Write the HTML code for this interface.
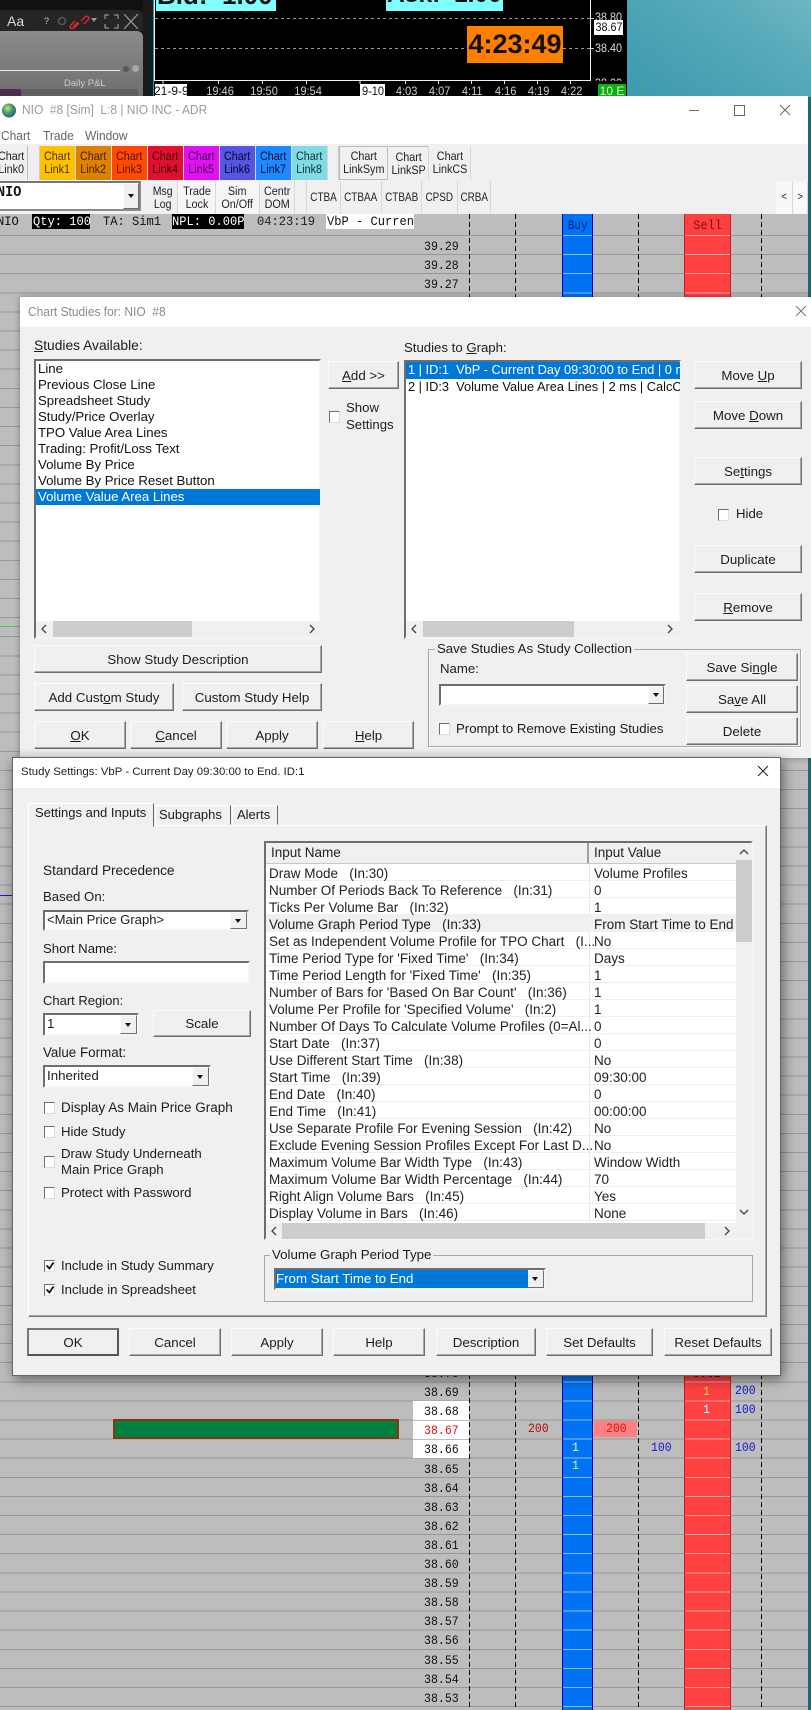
<!DOCTYPE html>
<html><head><meta charset="utf-8"><style>
html,body{margin:0;padding:0;width:811px;height:1710px;overflow:hidden;background:#bdbdbd}
body{position:relative;font-family:"Liberation Sans",sans-serif;font-size:13.2px;color:#1c1c1c}
div,span.a,svg.a{position:absolute}
.t{position:absolute;white-space:nowrap;line-height:16px}
.m{position:absolute;white-space:nowrap;line-height:16px;font-family:"Liberation Mono",monospace;font-size:13px;color:#111;transform:scaleX(.89);transform-origin:left}
.n{position:absolute;white-space:nowrap;line-height:16px;font-family:"Liberation Mono",monospace;font-size:12.5px;transform:scaleX(.92);transform-origin:left}
.q{position:absolute;white-space:nowrap;line-height:15px;height:15px;font-family:"Liberation Mono",monospace;font-size:13px;color:#111}
.q span{display:inline-block;transform:scaleX(.93);transform-origin:left}
.sq{transform:scaleX(.92);transform-origin:left}
.b{position:absolute;box-sizing:border-box;background:#f0f0f0;border:1px solid;border-color:#fbfbfb #6e6e6e #6e6e6e #fbfbfb;box-shadow:inset -1px -1px 0 #a8a8a8;display:flex;align-items:center;justify-content:center;white-space:nowrap;font-size:13.3px}
.tb{position:absolute;box-sizing:border-box;text-align:center;font-size:12.4px;line-height:13px;color:#222;display:flex;align-items:center;justify-content:center;overflow:hidden;border-right:1px solid #d8d8d8}
.tb span{display:inline-block;transform:scaleX(.87)}
.s{transform:scaleX(.8)!important}
.cb{position:absolute;box-sizing:border-box;width:11px;height:12px;background:#fff;border:1px solid;border-color:#6e6e6e #ddd #ddd #6e6e6e}
.in{position:absolute;box-sizing:border-box;background:#fff;border:2px solid;border-color:#6e6e6e #f4f4f4 #f4f4f4 #6e6e6e}
.ar{position:absolute;box-sizing:border-box;top:0;bottom:0;right:0;background:#f0f0f0;border:1px solid;border-color:#fbfbfb #6e6e6e #6e6e6e #fbfbfb}
.ar:after{content:"";position:absolute;left:50%;top:50%;margin:-2px 0 0 -3.5px;border:3.5px solid transparent;border-top:4px solid #111;border-bottom:0}
.dv{position:absolute;top:214px;height:1496px;width:1px;background:repeating-linear-gradient(to bottom,#000 0 5px,transparent 5px 8px)}
.r{position:absolute;left:269px;white-space:nowrap;line-height:17px;font-size:13.5px;color:#222}
.v{position:absolute;left:594px;white-space:nowrap;line-height:17px;font-size:13.5px;color:#222}
.li{position:absolute;left:38px;white-space:nowrap;line-height:16px;font-size:13.2px;color:#111}
</style></head><body>

<!-- top backdrop -->
<div style="left:0;top:0;width:811px;height:97px;background:#000"></div>
<div style="left:627px;top:0;width:184px;height:97px;background:linear-gradient(35deg,#3f9aad 0%,#4ba3b4 40%,#5aabbb 70%,#6fb6c3 100%)"></div>
<!-- left panel -->
<div style="left:0;top:0;width:143px;height:97px;background:#111"></div>
<div style="left:0;top:10px;width:143px;height:21px;background:#252525;border-radius:0 6px 0 0"></div>
<div style="left:0;top:31px;width:143px;height:66px;background:linear-gradient(#8a8a8a,#6f6f6f);border-radius:0 6px 0 0"></div>
<div style="left:0;top:70px;width:120px;height:1px;background:#eee"></div>
<div style="left:0;top:89px;width:138px;height:8px;background:#5f5f5f"></div>
<div style="left:0;top:89px;width:21px;height:8px;background:#4c2c4c"></div>
<div class="t" style="left:64px;top:76px;font-size:9.5px;color:#ccc">Daily P&amp;L</div>
<div style="left:123px;top:66px;width:6px;height:6px;border-radius:50%;background:#555"></div>
<div style="left:132px;top:65px;width:7px;height:7px;border-radius:50%;background:#a8a8a8"></div>
<div class="t" style="left:7px;top:13px;font-size:14px;color:#ddd">Aa</div>
<div class="t" style="left:44px;top:13px;font-size:9px;color:#ccc">?</div>
<svg class="a" style="left:56px;top:14px" width="84" height="15" viewBox="0 0 84 15" fill="none">
<circle cx="6" cy="7" r="3.5" stroke="#555" stroke-width="1.6"/>
<path d="M17 13l5-5M25 7l4-4c3-2 5 1 3 3l-4 4M23 9l-5 5c-3 2-5-1-3-3l4-4" stroke="#d02a30" stroke-width="1.5"/>
<path d="M35 4h6l-3 4z" fill="#999"/>
<path d="M49 5V1h4M58 1h4v4M62 10v4h-4M53 14h-4v-4" stroke="#aaa" stroke-width="1"/>
<path d="M68 0l14 15M82 0L68 15" stroke="#9a9a9a" stroke-width="1.2"/>
</svg>
<!-- chart -->
<div style="left:143px;top:0;width:10px;height:97px;background:#1a1a1a"></div>
<div style="left:153px;top:0;width:1px;height:97px;background:#2a9aa8"></div>
<div style="left:154px;top:0;width:1px;height:81px;background:#eee"></div>
<div style="left:154px;top:80px;width:437px;height:1px;background:#f0f0f0"></div>
<div style="left:590px;top:0;width:1px;height:81px;background:#f0f0f0"></div>
<div style="left:155px;top:18px;width:435px;height:1px;background:repeating-linear-gradient(to right,#999 0 3px,transparent 3px 6px)"></div>
<div style="left:155px;top:48px;width:435px;height:1px;background:repeating-linear-gradient(to right,#999 0 3px,transparent 3px 6px)"></div>
<div style="left:156px;top:0;width:120px;height:11px;background:#80ffff"></div>
<div style="left:386px;top:0;width:117px;height:11px;background:#80ffff"></div>
<div style="left:156px;top:0;width:120px;height:5px;overflow:hidden"><div class="t" style="left:1px;top:-18px;line-height:26px;font-weight:bold;font-size:26px;color:#111;white-space:pre">Bid:  1.00</div></div>
<div style="left:386px;top:0;width:117px;height:5px;overflow:hidden"><div class="t" style="left:1px;top:-18px;line-height:26px;font-weight:bold;font-size:24.6px;color:#111;white-space:pre">Ask:  1.00</div></div>
<div style="left:467px;top:26px;width:96px;height:37px;background:#ff8000"></div>
<div class="t" style="left:467px;top:29px;width:96px;line-height:30px;text-align:center;font-weight:bold;font-size:27px;color:#111">4:23:49</div>
<div style="left:591px;top:18px;width:3px;height:1px;background:#ccc"></div>
<div style="left:591px;top:48px;width:3px;height:1px;background:#ccc"></div>
<div class="t" style="left:595px;top:9px;font-size:12px;color:#ddd;transform:scaleX(.9);transform-origin:left">38.80</div>
<div class="t" style="left:594px;top:20px;width:29px;height:15px;background:#fff;color:#111;font-size:12px;line-height:15px;text-align:center"><span style="display:inline-block;transform:scaleX(.9)">38.67</span></div>
<div class="t" style="left:595px;top:40px;font-size:12px;color:#ddd;transform:scaleX(.9);transform-origin:left">38.40</div>
<div style="left:592px;top:75px;width:34px;height:6px;overflow:hidden"><div class="t" style="left:3px;top:0;font-size:12px;color:#ddd;transform:scaleX(.9);transform-origin:left">38.00</div></div>
<!-- time axis -->
<div style="left:155px;top:84px;width:32px;height:13px;background:#fff"></div>
<div style="left:360px;top:84px;width:25px;height:13px;background:#fff"></div>
<div style="left:0;top:0;width:0;height:0;color:#ccc;font-size:12px">
<div class="t" style="left:154px;top:83px;width:33px;overflow:hidden;color:#111;font-size:12px">21-9-9</div>
<div class="t" style="left:205px;top:83px;font-size:12px;transform:scaleX(.92)">19:46</div>
<div class="t" style="left:249px;top:83px;font-size:12px;transform:scaleX(.92)">19:50</div>
<div class="t" style="left:293px;top:83px;font-size:12px;transform:scaleX(.92)">19:54</div>
<div class="t" style="left:361px;top:83px;font-size:12px;color:#111;transform:scaleX(.92)">9-10</div>
<div class="t" style="left:395px;top:83px;font-size:12px;transform:scaleX(.92)">4:03</div>
<div class="t" style="left:428px;top:83px;font-size:12px;transform:scaleX(.92)">4:07</div>
<div class="t" style="left:461px;top:83px;font-size:12px;transform:scaleX(.92)">4:11</div>
<div class="t" style="left:494px;top:83px;font-size:12px;transform:scaleX(.92)">4:16</div>
<div class="t" style="left:527px;top:83px;font-size:12px;transform:scaleX(.92)">4:19</div>
<div class="t" style="left:560px;top:83px;font-size:12px;transform:scaleX(.92)">4:22</div>
</div>
<svg class="a" style="left:155px;top:80px" width="436" height="5" stroke="#eee" stroke-width="1"><path d="M8 0v4M63.500 0v4M107.500 0v4M151.500 0v4M205 0v4M250.500 0v4M283.500 0v4M316.500 0v4M349.500 0v4M382.500 0v4M415.500 0v4"/></svg>
<div class="t" style="left:598px;top:84px;width:28px;height:13px;background:#0cb00c;color:#e8e8e8;font-size:12px;line-height:14px;text-align:center">10 E</div>

<!-- ladder -->
<div style="left:0;top:214px;width:808px;height:1496px;background:#bdbdbd"></div>
<div style="left:808px;top:97px;width:3px;height:1613px;background:#1f6a70"></div>
<div style="left:0;top:235px;width:808px;height:1475px;background:repeating-linear-gradient(to bottom,#979797 0 1px,transparent 1px 19.105px)"></div>
<div style="left:562px;top:214px;width:31px;height:1496px;box-sizing:border-box;border-left:1px solid #0000c8;border-right:1px solid #0000c8;background:#0073f5"></div>
<div style="left:563px;top:235px;width:29px;height:1475px;background:repeating-linear-gradient(to bottom,#8fbcf0 0 1px,transparent 1px 19.105px)"></div>
<div style="left:684px;top:214px;width:47px;height:1496px;box-sizing:border-box;border-left:1px solid #d01818;border-right:1px solid #d01818;background:#ff4040"></div>
<div style="left:685px;top:235px;width:45px;height:1475px;background:repeating-linear-gradient(to bottom,#f5a5a5 0 1px,transparent 1px 19.105px)"></div>
<div class="dv" style="left:469px"></div><div class="dv" style="left:515px"></div><div class="dv" style="left:638px"></div><div class="dv" style="left:761px"></div>
<div class="t" style="left:562px;top:218px;width:31px;text-align:center;font-family:'Liberation Mono',monospace;font-size:13px;color:#002080"><span style="display:inline-block;transform:scaleX(.85)">Buy</span></div>
<div class="t" style="left:684px;top:218px;width:47px;text-align:center;font-family:'Liberation Mono',monospace;font-size:13px;color:#801010"><span style="display:inline-block;transform:scaleX(.93)">Sell</span></div>
<!-- info row -->
<div style="left:0;top:214px;width:20px;height:16px;overflow:hidden"><div class="q" style="left:-3px;top:0"><span>NIO</span></div></div>
<div class="q" style="left:32px;top:214px;width:58px;background:#000;color:#fff"><span style="margin-left:1px">Qty: 100</span></div>
<div class="q" style="left:103px;top:214px"><span>TA: Sim1</span></div>
<div class="q" style="left:172px;top:214px;width:72px;background:#000;color:#fff"><span>NPL: 0.00P</span></div>
<div class="q" style="left:257px;top:214px;color:#222"><span>04:23:19</span></div>
<div class="q" style="left:326px;top:214px;width:88px;background:#fff;overflow:hidden"><span style="margin-left:1px">VbP - Current</span></div>
<!-- prices top -->
<div class="m" style="left:424px;top:239px">39.29</div>
<div class="m" style="left:424px;top:258px">39.28</div>
<div class="m" style="left:424px;top:277px">39.27</div>
<!-- left strays -->
<div style="left:0;top:626px;width:20px;height:1px;background:#40d040"></div>
<div style="left:0;top:895px;width:13px;height:1px;background:#1414d8"></div>
<!-- prices bottom -->
<div class="m" style="left:424px;top:1366px">38.70</div>
<div class="m" style="left:693px;top:1366px;color:#222">0.02</div>
<div class="m" style="left:424px;top:1385px">38.69</div>
<div style="left:413px;top:1401px;width:56px;height:57px;background:#fff"></div>
<div style="left:413px;top:1420px;width:56px;height:1px;background:#bbb"></div>
<div style="left:413px;top:1439px;width:56px;height:1px;background:#bbb"></div>
<div class="m" style="left:424px;top:1404px">38.68</div>
<div class="m" style="left:424px;top:1423px;color:#e01010">38.67</div>
<div class="m" style="left:424px;top:1442px">38.66</div>
<div class="m" style="left:424px;top:1462px">38.65</div>
<div class="m" style="left:424px;top:1481px">38.64</div>
<div class="m" style="left:424px;top:1500px">38.63</div>
<div class="m" style="left:424px;top:1519px">38.62</div>
<div class="m" style="left:424px;top:1538px">38.61</div>
<div class="m" style="left:424px;top:1557px">38.60</div>
<div class="m" style="left:424px;top:1576px">38.59</div>
<div class="m" style="left:424px;top:1595px">38.58</div>
<div class="m" style="left:424px;top:1614px">38.57</div>
<div class="m" style="left:424px;top:1633px">38.56</div>
<div class="m" style="left:424px;top:1653px">38.55</div>
<div class="m" style="left:424px;top:1672px">38.54</div>
<div class="m" style="left:424px;top:1691px">38.53</div>
<div style="left:113px;top:1419px;width:286px;height:20px;box-sizing:border-box;background:#008044;border:2px solid #8a3410"></div>
<div style="left:594px;top:1421px;width:43px;height:16px;background:#ff8080"></div>
<div class="n" style="left:528px;top:1421px;color:#a81010">200</div>
<div class="n" style="left:606px;top:1421px;color:#e01010">200</div>
<div class="m" style="left:572px;top:1440px;color:#e8f4ff">1</div>
<div class="m" style="left:572px;top:1458px;color:#c8ff60">1</div>
<div class="n" style="left:651px;top:1440px;color:#1818d0">100</div>
<div class="m" style="left:703px;top:1384px;color:#ffd040">1</div>
<div class="m" style="left:703px;top:1402px;color:#fff">1</div>
<div class="n" style="left:735px;top:1383px;color:#1818d0">200</div>
<div class="n" style="left:735px;top:1402px;color:#1818d0">100</div>
<div class="n" style="left:735px;top:1440px;color:#1818d0">100</div>

<!-- main window chrome -->
<div style="left:0;top:96px;width:808px;height:48px;background:#fff"></div>
<svg class="a" style="left:1px;top:102px" width="16" height="17"><defs><radialGradient id="g" cx=".4" cy=".35" r=".7"><stop offset="0" stop-color="#b8e890"/><stop offset=".5" stop-color="#4a9a60"/><stop offset="1" stop-color="#1c5a9c"/></radialGradient></defs><circle cx="8" cy="8.500" r="7" fill="url(#g)"/></svg>
<div class="t sq" style="left:22px;top:102px;font-size:13px;color:#9a9a9a;white-space:pre">NIO  #8 [Sim]  L:8 | NIO INC - ADR</div>
<svg class="a" style="left:685px;top:102px" width="110" height="16" stroke="#666" stroke-width="1" fill="none"><path d="M4 8.500h10M49.500 3.500h10v10h-10zM95 3l10 10M105 3L95 13"/></svg>
<div class="t sq" style="left:1px;top:128px;font-size:13px;color:#666">Chart</div>
<div class="t sq" style="left:43px;top:128px;font-size:13px;color:#666">Trade</div>
<div class="t sq" style="left:85px;top:128px;font-size:13px;color:#666">Window</div>
<!-- toolbar -->
<div style="left:0;top:144px;width:808px;height:70px;background:#f0f0f0"></div>
<div class="tb" style="left:0;top:146px;width:28px;height:34px;background:#f0f0f0;border-right:1px solid #bbb;justify-content:flex-end;padding-right:3px"><span style="transform-origin:right">Chart<br>Link0</span></div>
<div style="left:29px;top:146px;width:10px;height:34px;background:#eee;border-right:1px solid #ccc"></div>
<div class="tb" style="left:40px;top:146px;width:36px;height:34px;background:#ffc000;color:#503000"><span>Chart<br>Link1</span></div>
<div class="tb" style="left:76px;top:146px;width:36px;height:34px;background:#e08000;color:#402000"><span>Chart<br>Link2</span></div>
<div class="tb" style="left:112px;top:146px;width:36px;height:34px;background:#ff4a00;color:#601000"><span>Chart<br>Link3</span></div>
<div class="tb" style="left:148px;top:146px;width:36px;height:34px;background:#e01030;color:#400008"><span>Chart<br>Link4</span></div>
<div class="tb" style="left:184px;top:146px;width:36px;height:34px;background:#e010f0;color:#40004a"><span>Chart<br>Link5</span></div>
<div class="tb" style="left:220px;top:146px;width:36px;height:34px;background:#5555e0;color:#000830"><span>Chart<br>Link6</span></div>
<div class="tb" style="left:256px;top:146px;width:36px;height:34px;background:#2088ff;color:#001030"><span>Chart<br>Link7</span></div>
<div class="tb" style="left:292px;top:146px;width:36px;height:34px;background:#80dce4;color:#103038"><span>Chart<br>Link8</span></div>
<div style="left:329px;top:146px;width:9px;height:34px;border-right:1px solid #ccc"></div>
<div class="tb" style="left:339px;top:146px;width:49px;height:34px;border:1px solid;border-color:#bbb #bbb #bbb #bbb"><span>Chart<br>LinkSym</span></div>
<div class="tb" style="left:389px;top:146px;width:40px;height:34px;border-top:1px solid #bbb"><span>Chart<br>LinkSP</span></div>
<div class="tb" style="left:429px;top:146px;width:42px;height:34px"><span>Chart<br>LinkCS</span></div>
<!-- combo -->
<div class="in" style="left:-2px;top:181px;width:143px;height:30px;border-color:#777 #8a8a8a #8a8a8a #f0f0f0"></div>
<div style="left:0;top:184px;width:40px;height:22px;overflow:hidden"><div class="t" style="left:-3px;top:1px;font-size:15px;font-family:'Liberation Mono',monospace;font-weight:bold;color:#111;transform:scaleX(.9);transform-origin:left">NIO</div></div>
<div style="left:123px;top:183px;width:16px;height:26px"><div class="ar" style="left:0;width:16px;right:auto"></div></div>
<div class="tb" style="left:149px;top:181px;width:29px;height:33px"><span style="transform:scaleX(.85)">Msg<br>Log</span></div>
<div class="tb" style="left:178px;top:181px;width:38px;height:33px;background:#f6f6f6"><span>Trade<br>Lock</span></div>
<div class="tb" style="left:216px;top:181px;width:44px;height:33px;background:#f6f6f6"><span>Sim<br>On/Off</span></div>
<div class="tb" style="left:260px;top:181px;width:35px;height:33px"><span>Centr<br>DOM</span></div>
<div class="tb" style="left:306px;top:181px;width:35px;height:33px;border-left:1px solid #d8d8d8"><span class="s">CTBA</span></div>
<div class="tb" style="left:341px;top:181px;width:41px;height:33px"><span class="s">CTBAA</span></div>
<div class="tb" style="left:382px;top:181px;width:40px;height:33px"><span class="s">CTBAB</span></div>
<div class="tb" style="left:422px;top:181px;width:36px;height:33px"><span class="s">CPSD</span></div>
<div class="tb" style="left:458px;top:181px;width:33px;height:33px"><span class="s">CRBA</span></div>
<div class="tb" style="left:776px;top:181px;width:17px;height:33px;background:#f8f8f8;font-size:11px"><span>&lt;</span></div>
<div class="tb" style="left:793px;top:181px;width:15px;height:33px;background:#f8f8f8;font-size:11px"><span>&gt;</span></div>

<!-- Chart Studies window -->
<div style="left:20px;top:297px;width:791px;height:461px;background:#f0f0f0;box-shadow:0 0 6px rgba(0,0,0,.35)"></div>
<div style="left:20px;top:297px;width:791px;height:30px;background:#fff"></div>
<div class="t sq" style="left:28px;top:304px;font-size:13px;color:#8a8a8a;white-space:pre">Chart Studies for: NIO  #8</div>
<svg class="a" style="left:795px;top:305px" width="12" height="12" stroke="#777" fill="none"><path d="M1 1l10 10M11 1L1 11"/></svg>
<div class="t" style="left:34px;top:338px;font-size:13.8px"><u>S</u>tudies Available:</div>
<div class="t" style="left:404px;top:340px"><span>Studies to <u>G</u>raph:</span></div>
<!-- list 1 -->
<div class="in" style="left:34px;top:359px;width:287px;height:280px"></div>
<div class="li" style="top:361px">Line</div>
<div class="li" style="top:377px">Previous Close Line</div>
<div class="li" style="top:393px">Spreadsheet Study</div>
<div class="li" style="top:409px">Study/Price Overlay</div>
<div class="li" style="top:425px">TPO Value Area Lines</div>
<div class="li" style="top:441px">Trading: Profit/Loss Text</div>
<div class="li" style="top:457px">Volume By Price</div>
<div class="li" style="top:473px">Volume By Price Reset Button</div>
<div style="left:36px;top:489px;width:284px;height:16px;background:#0078d7"></div>
<div class="li" style="top:489px;color:#fff">Volume Value Area Lines</div>
<div style="left:36px;top:621px;width:284px;height:16px;background:#f0f0f0"></div>
<div style="left:53px;top:621px;width:139px;height:16px;background:#cdcdcd"></div>
<svg class="a" style="left:40px;top:624px" width="278" height="10" stroke="#444" stroke-width="1.300" fill="none"><path d="M6 1L2 5l4 4M270 1l4 4-4 4"/></svg>
<!-- list 2 -->
<div class="in" style="left:404px;top:360px;width:277px;height:279px"></div>
<div style="left:406px;top:362px;width:274px;height:17px;background:#0078d7"></div>
<div class="t" style="left:408px;top:362px;width:272px;overflow:hidden;color:#fff;white-space:pre;font-size:12.8px">1 | ID:1  VbP - Current Day 09:30:00 to End | 0 ms</div>
<div class="t" style="left:408px;top:379px;width:272px;overflow:hidden;white-space:pre;color:#111;font-size:12.8px">2 | ID:3  Volume Value Area Lines | 2 ms | CalcOn</div>
<div style="left:406px;top:621px;width:274px;height:16px;background:#f0f0f0"></div>
<div style="left:423px;top:621px;width:151px;height:16px;background:#cdcdcd"></div>
<svg class="a" style="left:410px;top:624px" width="266" height="10" stroke="#444" stroke-width="1.300" fill="none"><path d="M6 1L2 5l4 4M258 1l4 4-4 4"/></svg>
<!-- center buttons -->
<div class="b" style="left:328px;top:361px;width:71px;height:28px"><span><u>A</u>dd &gt;&gt;</span></div>
<div class="cb" style="left:329px;top:411px"></div>
<div class="t" style="left:346px;top:400px">Show</div>
<div class="t" style="left:346px;top:417px">Settings</div>
<!-- right buttons -->
<div class="b" style="left:694px;top:361px;width:108px;height:28px"><span>Move <u>U</u>p</span></div>
<div class="b" style="left:694px;top:401px;width:108px;height:28px"><span>Move <u>D</u>own</span></div>
<div class="b" style="left:694px;top:457px;width:108px;height:28px"><span>Se<u>t</u>tings</span></div>
<div class="cb" style="left:718px;top:509px"></div>
<div class="t" style="left:736px;top:506px">Hide</div>
<div class="b" style="left:694px;top:545px;width:108px;height:28px">Duplicate</div>
<div class="b" style="left:694px;top:593px;width:108px;height:28px"><span><u>R</u>emove</span></div>
<!-- bottom buttons -->
<div class="b" style="left:34px;top:645px;width:288px;height:28px">Show Study Description</div>
<div class="b" style="left:34px;top:683px;width:140px;height:28px"><span>Add Cust<u>o</u>m Study</span></div>
<div class="b" style="left:182px;top:683px;width:140px;height:28px">Custom Study Help</div>
<div class="b" style="left:34px;top:721px;width:92px;height:28px"><span><u>O</u>K</span></div>
<div class="b" style="left:130px;top:721px;width:92px;height:28px"><span><u>C</u>ancel</span></div>
<div class="b" style="left:226px;top:721px;width:92px;height:28px">Apply</div>
<div class="b" style="left:323px;top:721px;width:91px;height:28px"><span><u>H</u>elp</span></div>
<!-- group -->
<div style="left:428px;top:649px;width:373px;height:98px;box-sizing:border-box;border:1px solid #a8a8a8;box-shadow:1px 1px 0 #fff"></div>
<div class="t" style="left:435px;top:641px;background:#f0f0f0;padding:0 2px">Save Studies As Study Collection</div>
<div class="t" style="left:440px;top:661px">Name:</div>
<div class="in" style="left:439px;top:684px;width:227px;height:22px"><div class="ar" style="width:16px"></div></div>
<div class="cb" style="left:439px;top:723px"></div>
<div class="t" style="left:456px;top:721px">Prompt to Remove Existing Studies</div>
<div class="b" style="left:686px;top:653px;width:112px;height:28px"><span>Save Si<u>n</u>gle</span></div>
<div class="b" style="left:686px;top:685px;width:112px;height:28px"><span>Sa<u>v</u>e All</span></div>
<div class="b" style="left:686px;top:717px;width:112px;height:28px">Delete</div>

<!-- Study Settings window -->
<div style="left:12px;top:757px;width:769px;height:619px;box-sizing:border-box;background:#f0f0f0;border:1px solid #666;box-shadow:2px 3px 12px rgba(0,0,0,.5)"></div>
<div style="left:13px;top:758px;width:767px;height:30px;background:#fff"></div>
<div class="t" style="left:21px;top:764px;font-size:11.4px;color:#222">Study Settings: VbP - Current Day 09:30:00 to End. ID:1</div>
<svg class="a" style="left:757px;top:765px" width="12" height="12" stroke="#222" fill="none"><path d="M1 1l10 10M11 1L1 11"/></svg>
<!-- tab pane -->
<div style="left:28px;top:825px;width:739px;height:492px;box-sizing:border-box;border:1px solid;border-color:#fff #777 #777 #fff;box-shadow:inset -1px -1px 0 #aaa"></div>
<div style="left:28px;top:803px;width:126px;height:24px;box-sizing:border-box;background:#f0f0f0;border:1px solid;border-color:#fff #666 transparent #fff"></div>
<div class="t" style="left:35px;top:805px;font-size:13px">Settings and Inputs</div>
<div style="left:155px;top:805px;width:76px;height:20px;box-sizing:border-box;border:1px solid;border-color:#fff #666 transparent #fff"></div>
<div class="t" style="left:159px;top:807px;font-size:13px">Subgraphs</div>
<div style="left:232px;top:805px;width:46px;height:20px;box-sizing:border-box;border:1px solid;border-color:#fff #666 transparent #fff"></div>
<div class="t" style="left:237px;top:807px;font-size:13px">Alerts</div>
<!-- left col -->
<div class="t" style="left:43px;top:863px;font-size:13.6px">Standard Precedence</div>
<div class="t" style="left:43px;top:889px;font-size:13.2px">Based On:</div>
<div class="in" style="left:43px;top:910px;width:206px;height:21px"><div class="ar" style="width:17px"></div></div>
<div class="t" style="left:47px;top:912px;font-size:13.1px">&lt;Main Price Graph&gt;</div>
<div class="t" style="left:43px;top:941px;font-size:13.2px">Short Name:</div>
<div class="in" style="left:43px;top:961px;width:207px;height:23px"></div>
<div class="t" style="left:43px;top:993px;font-size:13px">Chart Region:</div>
<div class="in" style="left:43px;top:1013px;width:96px;height:23px"><div class="ar" style="width:17px"></div></div>
<div class="t" style="left:47px;top:1016px;font-size:13.3px">1</div>
<div class="b" style="left:153px;top:1010px;width:98px;height:27px">Scale</div>
<div class="t" style="left:43px;top:1045px;font-size:13.4px">Value Format:</div>
<div class="in" style="left:43px;top:1065px;width:168px;height:23px"><div class="ar" style="width:17px"></div></div>
<div class="t" style="left:47px;top:1068px;font-size:13.3px">Inherited</div>
<div class="cb" style="left:44px;top:1102px"></div>
<div class="t" style="left:61px;top:1100px;font-size:13.5px">Display As Main Price Graph</div>
<div class="cb" style="left:44px;top:1126px"></div>
<div class="t" style="left:61px;top:1124px">Hide Study</div>
<div class="cb" style="left:44px;top:1156px"></div>
<div class="t" style="left:61px;top:1146px">Draw Study Underneath</div>
<div class="t" style="left:61px;top:1162px">Main Price Graph</div>
<div class="cb" style="left:44px;top:1187px"></div>
<div class="t" style="left:61px;top:1185px">Protect with Password</div>
<div class="cb" style="left:44px;top:1260px"></div>
<svg class="a" style="left:45px;top:1261px" width="10" height="10" fill="none" stroke="#111" stroke-width="1.800"><path d="M1.500 4.500l3 3 4-6"/></svg>
<div class="t" style="left:61px;top:1258px;font-size:13.1px">Include in Study Summary</div>
<div class="cb" style="left:44px;top:1284px"></div>
<svg class="a" style="left:45px;top:1285px" width="10" height="10" fill="none" stroke="#111" stroke-width="1.800"><path d="M1.500 4.500l3 3 4-6"/></svg>
<div class="t" style="left:61px;top:1282px">Include in Spreadsheet</div>
<!-- table -->
<div style="left:264px;top:841px;width:489px;height:399px;box-sizing:border-box;background:#fff;border:2px solid;border-color:#6e6e6e #f6f6f6 #f6f6f6 #6e6e6e"></div>
<div style="left:266px;top:843px;width:470px;height:20px;background:#f0f0f0;border-bottom:1px solid #c8c8c8"></div>
<div style="left:587px;top:843px;width:2px;height:20px;background:#a0a0a0"></div>
<div style="left:589px;top:864px;width:1px;height:358px;background:#e8e8e8"></div>
<div style="left:266px;top:864px;width:470px;height:358px;background:repeating-linear-gradient(to bottom,transparent 0 16px,#eee 16px 17px)"></div>
<div style="left:266px;top:915px;width:470px;height:17px;background:#f0f0f0"></div>
<div class="t" style="left:271px;top:845px;font-size:13.5px;color:#222">Input Name</div>
<div class="t" style="left:594px;top:845px;font-size:13.5px;color:#222">Input Value</div>
<div class="r" style="top:865px;white-space:pre">Draw Mode   (In:30)</div><div class="v" style="top:865px">Volume Profiles</div>
<div class="r" style="top:882px;white-space:pre">Number Of Periods Back To Reference   (In:31)</div><div class="v" style="top:882px">0</div>
<div class="r" style="top:899px;white-space:pre">Ticks Per Volume Bar   (In:32)</div><div class="v" style="top:899px">1</div>
<div class="r" style="top:916px;white-space:pre">Volume Graph Period Type   (In:33)</div><div class="v" style="top:916px">From Start Time to End</div>
<div class="r" style="top:933px;white-space:pre">Set as Independent Volume Profile for TPO Chart   (I...</div><div class="v" style="top:933px">No</div>
<div class="r" style="top:950px;white-space:pre">Time Period Type for 'Fixed Time'   (In:34)</div><div class="v" style="top:950px">Days</div>
<div class="r" style="top:967px;white-space:pre">Time Period Length for 'Fixed Time'   (In:35)</div><div class="v" style="top:967px">1</div>
<div class="r" style="top:984px;white-space:pre">Number of Bars for 'Based On Bar Count'   (In:36)</div><div class="v" style="top:984px">1</div>
<div class="r" style="top:1001px;white-space:pre">Volume Per Profile for 'Specified Volume'   (In:2)</div><div class="v" style="top:1001px">1</div>
<div class="r" style="top:1018px">Number Of Days To Calculate Volume Profiles (0=Al...</div><div class="v" style="top:1018px">0</div>
<div class="r" style="top:1035px;white-space:pre">Start Date   (In:37)</div><div class="v" style="top:1035px">0</div>
<div class="r" style="top:1052px;white-space:pre">Use Different Start Time   (In:38)</div><div class="v" style="top:1052px">No</div>
<div class="r" style="top:1069px;white-space:pre">Start Time   (In:39)</div><div class="v" style="top:1069px">09:30:00</div>
<div class="r" style="top:1086px;white-space:pre">End Date   (In:40)</div><div class="v" style="top:1086px">0</div>
<div class="r" style="top:1103px;white-space:pre">End Time   (In:41)</div><div class="v" style="top:1103px">00:00:00</div>
<div class="r" style="top:1120px;white-space:pre">Use Separate Profile For Evening Session   (In:42)</div><div class="v" style="top:1120px">No</div>
<div class="r" style="top:1137px">Exclude Evening Session Profiles Except For Last D...</div><div class="v" style="top:1137px">No</div>
<div class="r" style="top:1154px;white-space:pre">Maximum Volume Bar Width Type   (In:43)</div><div class="v" style="top:1154px">Window Width</div>
<div class="r" style="top:1171px;white-space:pre">Maximum Volume Bar Width Percentage   (In:44)</div><div class="v" style="top:1171px">70</div>
<div class="r" style="top:1188px;white-space:pre">Right Align Volume Bars   (In:45)</div><div class="v" style="top:1188px">Yes</div>
<div class="r" style="top:1205px;white-space:pre">Display Volume in Bars   (In:46)</div><div class="v" style="top:1205px">None</div>
<!-- table scrollbars -->
<div style="left:736px;top:843px;width:16px;height:380px;background:#f0f0f0"></div>
<div style="left:736px;top:860px;width:16px;height:82px;background:#cdcdcd"></div>
<svg class="a" style="left:739px;top:848px" width="10" height="370" fill="none" stroke="#444" stroke-width="1.300"><path d="M1 6l4-4 4 4M1 362l4 4 4-4"/></svg>
<div style="left:266px;top:1223px;width:486px;height:16px;background:#f0f0f0"></div>
<div style="left:282px;top:1223px;width:423px;height:16px;background:#cdcdcd"></div>
<svg class="a" style="left:270px;top:1226px" width="462" height="10" fill="none" stroke="#444" stroke-width="1.300"><path d="M6 1L2 5l4 4M455 1l4 4-4 4"/></svg>
<!-- group -->
<div style="left:264px;top:1255px;width:489px;height:47px;box-sizing:border-box;border:1px solid #a8a8a8"></div>
<div class="t" style="left:270px;top:1247px;background:#f0f0f0;padding:0 2px;font-size:13.3px">Volume Graph Period Type</div>
<div class="in" style="left:274px;top:1268px;width:272px;height:22px"><div class="ar" style="width:18px"></div></div>
<div class="t" style="left:276px;top:1270px;width:252px;height:18px;background:#0078d7;color:#fff;line-height:18px;font-size:13.3px">From Start Time to End</div>
<!-- buttons -->
<div class="b" style="left:27px;top:1328px;width:92px;height:28px;border:2px solid #666;border-color:#777 #555 #555 #777;box-shadow:none">OK</div>
<div class="b" style="left:129px;top:1328px;width:92px;height:28px">Cancel</div>
<div class="b" style="left:231px;top:1328px;width:92px;height:28px">Apply</div>
<div class="b" style="left:333px;top:1328px;width:92px;height:28px">Help</div>
<div class="b" style="left:436px;top:1328px;width:100px;height:28px">Description</div>
<div class="b" style="left:546px;top:1328px;width:107px;height:28px">Set Defaults</div>
<div class="b" style="left:664px;top:1328px;width:108px;height:28px">Reset Defaults</div>
</body></html>
